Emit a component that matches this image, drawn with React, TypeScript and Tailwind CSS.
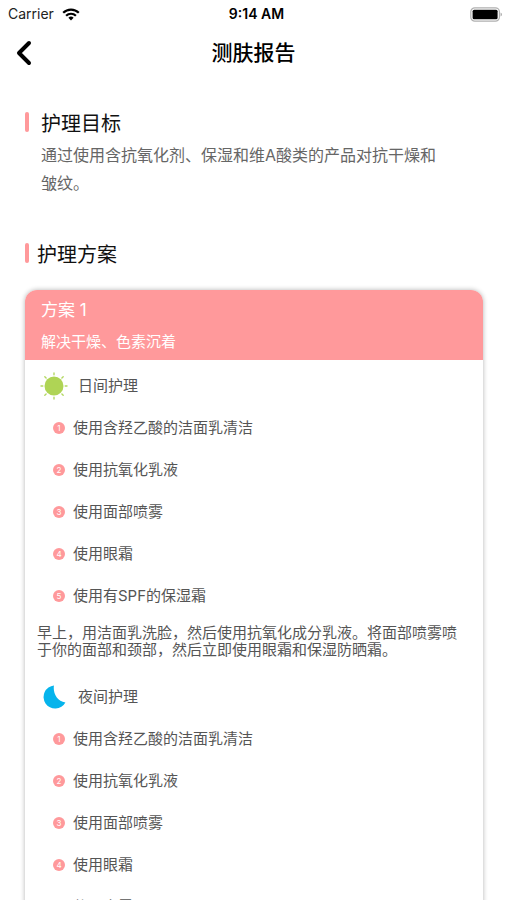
import { ChevronLeft } from "lucide-react";

const plan = {
  title: "方案 1",
  subtitle: "解决干燥、色素沉着",
  day: ["使用含羟乙酸的洁面乳清洁", "使用抗氧化乳液", "使用面部喷雾", "使用眼霜", "使用有SPF的保湿霜"],
  dayNote:
    "早上，用洁面乳洗脸，然后使用抗氧化成分乳液。将面部喷雾喷于你的面部和颈部，然后立即使用眼霜和保湿防晒霜。",
  night: ["使用含羟乙酸的洁面乳清洁", "使用抗氧化乳液", "使用面部喷雾", "使用眼霜", "使用水霜"],
};

const WifiIcon = () => (
  <svg viewBox="0 0 18 13" className="h-[13px] w-[18px]" fill="none" stroke="#000" strokeWidth="2.2">
    <path d="M1.2 4.8a11 11 0 0 1 15.6 0" />
    <path d="M4.1 7.8a6.9 6.9 0 0 1 9.8 0" />
    <path d="M9 12.4 6.4 9.8a3.7 3.7 0 0 1 5.2 0z" fill="#000" stroke="none" />
  </svg>
);

const BatteryIcon = () => (
  <svg viewBox="0 0 33 15" className="h-[15px] w-[33px]">
    <rect x="0.8" y="0.8" width="28.6" height="13.4" rx="4" fill="#fff" stroke="#b0b0b0" strokeWidth="1.2" />
    <rect x="2.6" y="2.8" width="25" height="9.4" rx="1.5" fill="#000" />
    <path d="M30.6 5.5c1.6.7 1.6 3.3 0 4z" fill="#9a9a9a" />
  </svg>
);

const SunIcon = () => (
  <svg viewBox="0 0 28 28" className="h-7 w-7" stroke="#b4d864" strokeWidth="1.4" strokeLinecap="round">
    <circle cx="14" cy="14" r="9.5" fill="#afd455" stroke="none" />
    <path d="M14 1v1.8M14 25.2V27M1 14h1.8M25.2 14H27M4.8 4.8l1.3 1.3M21.9 21.9l1.3 1.3M4.8 23.2l1.3-1.3M21.9 6.1l1.3-1.3" />
  </svg>
);

const MoonIcon = () => (
  <svg viewBox="0 0 28 28" className="h-7 w-7">
    <path d="M14 2.4C12.6 9.5 17 18.8 25.4 19.4A11.6 11.6 0 1 1 14 2.4z" fill="#06b4ec" />
  </svg>
);

const SectionTitle = ({ text, gap }: { text: string; gap: string }) => (
  <div className={`flex items-center ${gap}`}>
    <span className="mb-1 h-5 w-1 rounded-sm bg-[#ff999b]" />
    <h2 className="text-xl leading-7 text-[#111]">{text}</h2>
  </div>
);

const Steps = ({ items }: { items: string[] }) => (
  <ol>
    {items.map((item, i) => (
      <li key={item} className="flex h-[42px] items-center gap-2 pl-7">
        <span className="flex h-3 w-3 items-center justify-center rounded-full bg-[#ff999b] text-[8px] leading-none text-white">
          {i + 1}
        </span>
        <span>{item}</span>
      </li>
    ))}
  </ol>
);

const App = () => {
  return (
    <div
      lang="zh-CN"
      className="h-screen overflow-hidden bg-white font-['Inter','Noto_Sans_CJK_SC',sans-serif] text-[15px] text-[#555]"
    >
      <div className="grid h-7 grid-cols-3 items-center pr-1 pl-2 text-sm text-black">
        <div className="flex items-center gap-2">
          <span className="text-[#222]">Carrier</span>
          <WifiIcon />
        </div>
        <span className="pl-0.5 text-center font-semibold">9:14 AM</span>
        <div className="flex justify-end">
          <BatteryIcon />
        </div>
      </div>

      <header className="grid h-[50px] grid-cols-[40px_1fr_40px] items-center px-1">
        <button type="button" aria-label="返回" className="flex justify-center text-black">
          <ChevronLeft size={42} strokeWidth={2.4} />
        </button>
        <h1 className="text-center text-[21px] font-medium text-black">测肤报告</h1>
      </header>

      <main className="pt-8 pr-6 pl-[25px]">
        <section>
          <SectionTitle text="护理目标" gap="gap-3" />
          <p className="pt-[3px] pr-10 pl-4 text-base leading-7 text-[#666]">
            通过使用含抗氧化剂、保湿和维A酸类的产品对抗干燥和皱纹。
          </p>
        </section>

        <section className="pt-11">
          <SectionTitle text="护理方案" gap="gap-2" />
          <article className="mt-[21px] overflow-hidden rounded-t-xl bg-white shadow-[0_0_5px_rgba(0,0,0,0.3)]">
            <div className="h-[70px] bg-[#ff999b] px-4 pt-1 text-white">
              <h3 className="text-[17px] leading-8">{plan.title}</h3>
              <p className="leading-8">{plan.subtitle}</p>
            </div>
            <h4 className="flex items-center gap-2.5 px-[15px] pt-3 pb-[7px]">
              <SunIcon />
              日间护理
            </h4>
            <Steps items={plan.day} />
            <p className="pt-[7px] pr-5 pl-3 leading-[17px]">{plan.dayNote}</p>
            <h4 className="flex items-center gap-2.5 px-[15px] pt-[25px] pb-[7px]">
              <MoonIcon />
              夜间护理
            </h4>
            <Steps items={plan.night} />
          </article>
        </section>
      </main>
    </div>
  );
};

export default App;
